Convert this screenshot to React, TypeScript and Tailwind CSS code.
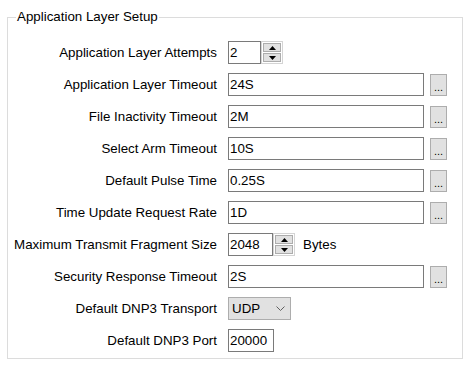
import React from 'react';

const Label: React.FC<{ text: string }> = ({ text }) => (
  <div className="h-[23px] leading-[23px] text-right whitespace-nowrap">{text}</div>
);

const TextField: React.FC<{ value: string; width: string }> = ({ value, width }) => (
  <div className={`${width} h-[23px] border border-[#7a7a7a] bg-white pl-[1px] leading-[21px]`}>{value}</div>
);

const EllipsisRow: React.FC<{ value: string }> = ({ value }) => (
  <div className="flex items-center">
    <TextField value={value} width="w-[196px]" />
    <button className="ml-[6px] w-[17px] h-[22px] bg-[#e1e1e1] border border-[#adadad] flex items-end justify-center pb-[3px] text-[11px] leading-[10px]">
      ...
    </button>
  </div>
);

const Spinner: React.FC = () => (
  <div className="w-[22px] h-[23px] flex flex-col border border-[#d4d4d4] bg-white p-[1px] gap-[1px]">
    <div className="flex-1 bg-[#e1e1e1] border border-[#adadad] flex items-center justify-center">
      <svg width="7" height="4" viewBox="0 0 7 4">
        <polygon points="3.5,0 7,4 0,4" fill="#000" />
      </svg>
    </div>
    <div className="flex-1 bg-[#e1e1e1] border border-[#adadad] flex items-center justify-center">
      <svg width="7" height="4" viewBox="0 0 7 4">
        <polygon points="0,0 7,0 3.5,4" fill="#000" />
      </svg>
    </div>
  </div>
);

const rows: { label: string; value?: string }[] = [
  { label: 'Application Layer Timeout', value: '24S' },
  { label: 'File Inactivity Timeout', value: '2M' },
  { label: 'Select Arm Timeout', value: '10S' },
  { label: 'Default Pulse Time', value: '0.25S' },
  { label: 'Time Update Request Rate', value: '1D' },
];

const App: React.FC = () => {
  return (
    <div className="w-[472px] h-[372px] bg-white text-black text-[13.33px] font-['Liberation_Sans',Arial,sans-serif] overflow-hidden">
      <fieldset className="ml-[7px] mt-[9px] w-[456px] h-[350px] border border-[#dcdcdc] pt-[16px]">
        <legend className="ml-[8px] px-[1px] leading-[16px]">Application Layer Setup</legend>

        <div className="grid grid-cols-[209px_auto] gap-x-[11px] gap-y-[9px]">
          <Label text="Application Layer Attempts" />
          <div className="flex items-center">
            <TextField value="2" width="w-[33px]" />
            <Spinner />
          </div>

          {rows.map((r) => (
            <React.Fragment key={r.label}>
              <Label text={r.label} />
              <EllipsisRow value={r.value ?? ''} />
            </React.Fragment>
          ))}

          <Label text="Maximum Transmit Fragment Size" />
          <div className="flex items-center">
            <TextField value="2048" width="w-[45px]" />
            <Spinner />
            <span className="ml-[8px]">Bytes</span>
          </div>

          <Label text="Security Response Timeout" />
          <EllipsisRow value="2S" />

          <Label text="Default DNP3 Transport" />
          <div className="flex items-center">
            <div className="w-[63px] h-[23px] bg-[#e1e1e1] border border-[#adadad] flex items-center justify-between pl-[3px] pr-[5px]">
              <span>UDP</span>
              <svg width="9" height="5" viewBox="0 0 9 5">
                <polyline points="0.5,0.5 4.5,4.5 8.5,0.5" fill="none" stroke="#606060" strokeWidth="1" />
              </svg>
            </div>
          </div>

          <Label text="Default DNP3 Port" />
          <div className="flex items-center">
            <TextField value="20000" width="w-[46px]" />
          </div>
        </div>
      </fieldset>
    </div>
  );
};

export default App;
